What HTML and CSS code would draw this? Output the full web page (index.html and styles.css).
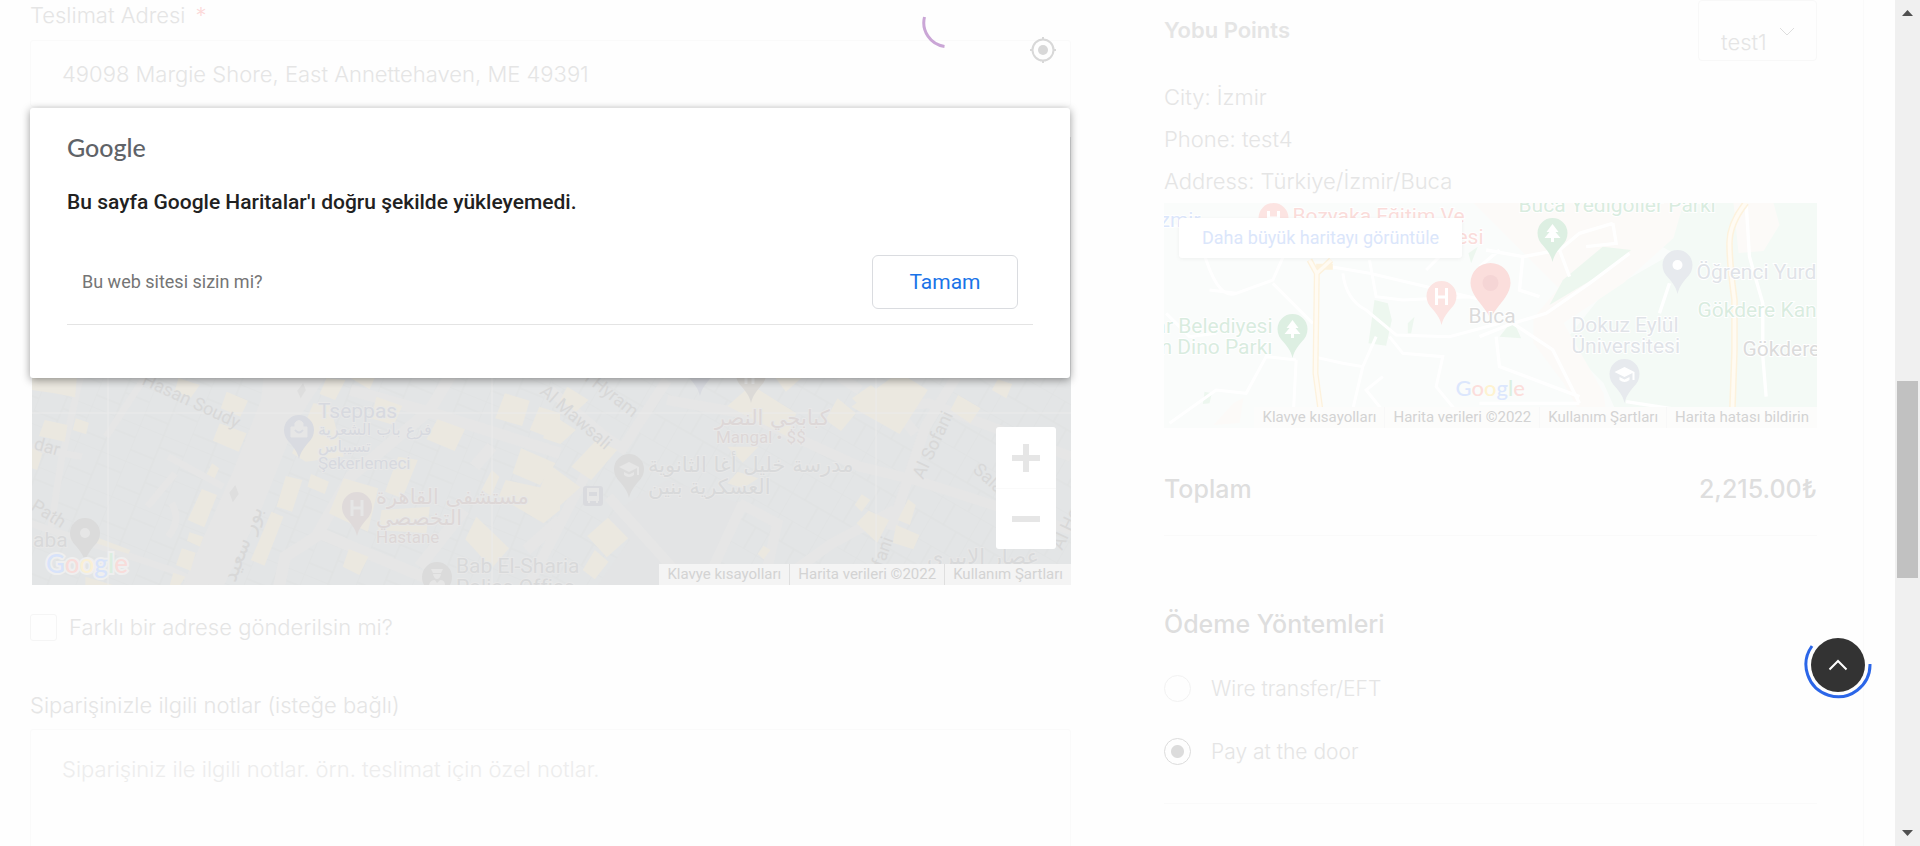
FILE: index.html
```html
<!DOCTYPE html>
<html lang="tr">
<head>
<meta charset="utf-8">
<title>Ödeme</title>
<link rel="stylesheet" href="styles.css">
</head>
<body>
<svg class="defs" width="0" height="0" aria-hidden="true">
  <defs>
    <path id="pin" d="M0 29C-2 21-5 18-9 13-13 9-15 5-15 0A15 15 0 0 1 15 0C15 5 13 9 9 13 5 18 2 21 0 29Z"/>
    <path id="tree" d="M0-10 6-2H3L8 4H1.500V8H-1.500V4H-8L-3-2H-6Z"/>
    <path id="cap" d="M0-7-10-2 0 3 8-1V6H10V-2ZM-5 3V6Q0 10 5 6V3L0 5.500Z"/>
    <pattern id="parcels" width="38" height="52" patternUnits="userSpaceOnUse" patternTransform="rotate(-68)">
      <path d="M0 0H38M0 26H38M0 0V52M13 0V26M26 26V52" fill="none" stroke="#dfe1e1" stroke-width="1"/>
    </pattern>
    <pattern id="parcels-east" width="44" height="48" patternUnits="userSpaceOnUse" patternTransform="rotate(30)">
      <path d="M0 0H44M0 24H44M0 0V48M15 0V24M30 24V48" fill="none" stroke="#dfe1e1" stroke-width="1"/>
    </pattern>
  </defs>
</svg>
<div class="page">
  <main class="checkout">
    <form class="billing">
      <label class="label" for="address">Teslimat Adresi <span class="required">*</span></label>
      <div class="address">
        <input class="address-input" id="address" type="text" value="49098 Margie Shore, East Annettehaven, ME 49391">
        <button class="locate" type="button" aria-label="Konumumu bul">
          <svg width="28" height="28" viewBox="0 0 28 28" fill="none" stroke="#d8d8d8" stroke-width="2"><circle cx="14" cy="14" r="10.500"/><path d="M14 1V4M14 24V27M1 14H4M24 14H27"/><circle cx="14" cy="14" r="5" fill="#d8d8d8" stroke="none"/></svg>
        </button>
      </div>
      <div class="map-stage">
        <div class="map">
          <svg class="map-art" viewBox="0 0 1039 448" preserveAspectRatio="xMidYMid slice">
            <rect width="1039" height="448" fill="#e3e5e6"/>
            <rect width="520" height="448" fill="url(#parcels)"/>
            <rect x="520" width="519" height="448" fill="url(#parcels-east)"/>
            <g transform="translate(-12 233) scale(.3444 .3333)">
              <path d="M710 0H900L800 160 700 420 590 650H470L620 300 700 90Z" fill="#e6e6e6"/>
              <g fill="none" stroke="#e6e6e6" stroke-width="20">
                <path d="M180 0 120 270 90 470M30 230 180 260M370 10 250 200M30 460 440 600 560 660M430 260 590 350M450 310 370 410M440 400Q470 450 430 500"/>
                <path stroke-width="34" d="M960 60 1200 130 1568 250M1260 0 1190 120 960 320 860 500 770 560 750 660M870 490 1240 650M1290 420 1160 590M1370 230 1320 290M1470 540 1568 450"/>
              </g>
              <g fill="#ebe8e0">
                <path d="M35 24H165L160 82 100 70 35 60ZM460 24 522 45 495 85 450 62ZM600 65 662 92 640 140 583 115ZM72 150 138 165 130 215 55 198ZM162 145 200 158 192 193 153 180ZM35 235 65 250 50 300 35 295ZM580 160 658 190 635 245 560 212ZM890 24 945 30 915 90 870 72ZM960 24H1030L1015 58ZM1035 80 1110 108 1085 165 1020 145ZM1212 148 1292 178 1262 243 1180 208ZM1408 70 1480 92 1458 168 1380 145ZM1508 110 1568 130V215L1480 180ZM852 100 900 105 940 260 830 275 790 250ZM1098 260 1155 270 1110 385 1060 365ZM1455 235 1555 280 1510 345 1430 310ZM1370 300 1392 320 1368 378 1340 360Z"/>
                <path d="M772 318 820 330 790 425 745 410ZM845 312 897 335 885 372 835 350ZM558 280 578 295 565 325 542 312ZM528 357 572 375 535 472 487 450ZM940 325 1040 355 1010 485 897 430ZM1050 420 1190 410 1180 490 1040 480ZM1410 330 1568 365V420L1520 460 1390 380ZM730 425 765 440 710 587 670 570ZM1325 440 1420 535 1370 595 1293 508ZM492 487 533 500 522 530 485 512ZM470 535 510 548 495 602 453 585ZM955 537 1012 560 985 615 937 590ZM445 608 480 620 465 645H435ZM230 505 320 540 315 552 222 520ZM190 620 270 645H190Z"/>
              </g>
              <path d="M822 40 830 60 815 85 805 62ZM625 345 635 372 618 397 608 368Z" fill="#dedede"/>
            </g>
            <g transform="translate(518 233) scale(.3444 .3333)">
              <path d="M270 370 340 330 550 400 470 645H140L230 510 170 440Z" fill="#e3e4e5"/>
              <g fill="none" stroke="#e6e6e6" stroke-width="30">
                <path d="M0 60 160 200 210 235 340 30M160 200-60 640M170 380 400 645M340 90 560 130 900 290 1060 330 1513 480M560 400 450 645M550 400 660 460 620 645M840 20 900 60M1180 20 1090 170 990 480M990 110 1100 100 1513 260M1000 420 820 520 650 645M960 60 1060 190"/>
              </g>
              <g fill="#ebe8e0">
                <path d="M50 50 112 90 75 125 30 90ZM0 130 75 180 30 222-20 205ZM135 210 195 240 120 330 62 290ZM0 285 88 352 15 420-40 380ZM585 45 715 130 690 200 515 108ZM655 24H730L685 65ZM835 85 888 130 845 183 800 150ZM932 45 962 72 910 118 877 85ZM990 24H1040L1097 60 1015 192 875 110ZM1185 75 1250 115 1220 160 1163 120ZM1300 28 1342 42 1325 85 1283 60Z"/>
                <path d="M515 230H605L560 278ZM545 305 605 325 560 355 515 340ZM905 373 930 390 905 425 885 405ZM1040 388 1062 405 1045 465 1010 450ZM925 422 985 450 950 518 890 460ZM1005 465 1073 495 1055 538 995 518ZM620 527 640 540 620 568 603 552ZM168 443 227 505 165 562 108 498ZM130 540 170 575 130 628 95 600Z"/>
              </g>
            </g>
            <path d="M0 276H1039M76 0V448M460 0V448M844 0V448" stroke="#ebebeb" fill="none"/>
            <g class="street">
              <text transform="translate(109 247) rotate(25)">Hasan Soudy</text>
              <text transform="translate(1 312) rotate(15)">dar</text>
              <text transform="translate(-2 372) rotate(32)">Path</text>
              <text transform="translate(203 446) rotate(-69)" class="ar">بور سعيد</text>
              <text transform="translate(507 256) rotate(41)">Al Mawsali</text>
              <text transform="translate(552 243) rotate(38)">l Hyram</text>
              <text transform="translate(891 343) rotate(-65)">Al Sofani</text>
              <text transform="translate(940 334) rotate(42)">Sala</text>
              <text transform="translate(851 431) rotate(-70)">fani</text>
              <text transform="translate(1030 414) rotate(-65)">Al Ho</text>
            </g>
            <g class="poi poi-blue">
              <text x="286" y="281">Tseppas</text><text x="286" y="298" class="ar-small">فرع باب الشعرية</text><text x="286" y="315" class="ar-small">تسيباس</text><text x="286" y="332" class="small">Şekerlemeci</text>
            </g>
            <g class="poi poi-red">
              <text x="344" y="367" class="ar">مستشفى القاهرة</text><text x="344" y="388" class="ar">التخصصي</text><text x="344" y="406" class="small">Hastane</text>
            </g>
            <g class="poi poi-red"><text x="683" y="288" class="ar">كبابجي النصر</text><text x="684" y="306" class="small">Mangal • $$</text></g>
            <g class="poi"><text x="616" y="335" class="ar">مدرسة خليل أغا الثانوية</text><text x="616" y="357" class="ar">العسكرية بنين</text>
              <text x="1" y="410">aba</text><text x="424" y="436">Bab El-Sharia</text><text x="424" y="457">Police Office</text><text x="895" y="427" class="ar">عصار الابيري</text></g>
            <use href="#pin" x="267" y="293" fill="#d9dbe1"/><path d="M259 290H275V300H259ZM263 290V286Q267 281 271 286V290" fill="#e6e6e6" stroke="#e6e6e6"/><path d="M263 293Q267 298 271 293" fill="none" stroke="#d9dbe1" stroke-width="2"/>
            <use href="#pin" x="325" y="370" fill="#dfdada"/><path d="M320 363V379M330 363V379M320 371H330" stroke="#e6e6e6" stroke-width="3"/>
            <use href="#pin" x="53" y="396" fill="#dbdbdb"/><circle cx="53" cy="396" r="5" fill="#e6e6e6"/>
            <use href="#pin" x="405" y="440" fill="#dbdbdb"/><path d="M399 432H411L409 436H401ZM401 437H409Q408 442 405 442T401 437ZM397 448Q398 443 403 443L405 446 408 443Q413 443 413 448Z" fill="#e6e6e6"/>
            <use href="#pin" x="597" y="332" fill="#dbdbdb"/><use href="#cap" x="597" y="332" fill="#e6e6e6"/>
            <use href="#pin" x="668" y="230" fill="#d9dbe1"/><use href="#pin" x="719" y="237" fill="#dcdad7"/>
            <path d="M714 230V247M721 230V247" stroke="#e6e6e6" stroke-width="3"/>
            <rect x="551" y="349" width="20" height="20" rx="3" fill="#d9dade"/><path d="M556 352H566V363H556ZM557 363V366M565 363V366" fill="#e6e6e6" stroke="#e6e6e6" stroke-width="2"/><path d="M557 355H565V359H557Z" fill="#d9dade"/>
            <text class="glogo glogo-halo" x="14" y="436"><tspan fill="#d8e3fa">G</tspan><tspan fill="#f8dcda">o</tspan><tspan fill="#faf0d5">o</tspan><tspan fill="#d8e3fa">g</tspan><tspan fill="#dbeee0">l</tspan><tspan fill="#f8dcda">e</tspan></text>
          </svg>
          <div class="zoom">
            <button class="zoom-btn" type="button" aria-label="Yakınlaştır"><svg width="28" height="28" viewBox="0 0 28 28"><path d="M0 14H28M14 0V28" stroke="#e6e6e6" stroke-width="6"/></svg></button>
            <button class="zoom-btn" type="button" aria-label="Uzaklaştır"><svg width="28" height="28" viewBox="0 0 28 28"><path d="M0 14H28" stroke="#e6e6e6" stroke-width="6"/></svg></button>
          </div>
          <div class="credits"><button class="credit" type="button">Klavye kısayolları</button><span class="credit">Harita verileri ©2022</span><a class="credit" href="#">Kullanım Şartları</a></div>
        </div>
        <section class="dialog" role="dialog" aria-labelledby="dialog-title">
          <div class="dialog-logo">Google</div>
          <h2 class="dialog-title" id="dialog-title">Bu sayfa Google Haritalar'ı doğru şekilde yükleyemedi.</h2>
          <div class="dialog-row"><a class="dialog-link" href="#">Bu web sitesi sizin mi?</a><button class="dialog-ok" type="button">Tamam</button></div>
        </section>
      </div>
      <label class="check"><input class="check-box" type="checkbox">Farklı bir adrese gönderilsin mi?</label>
      <label class="label" for="notes">Siparişinizle ilgili notlar (isteğe bağlı)</label>
      <textarea class="notes" id="notes" placeholder="Siparişiniz ile ilgili notlar. örn. teslimat için özel notlar."></textarea>
    </form>

    <aside class="summary">
      <div class="points">
        <h3 class="points-title">Yobu Points</h3>
        <div class="picker">
          <select class="picker-select" aria-label="Yobu Points"><option>test1</option></select>
          <svg class="picker-arrow" width="16" height="10" viewBox="0 0 16 10" fill="none" stroke="#dedede"><path d="M1 1 8 8 15 1"/></svg>
        </div>
      </div>
      <p class="info">City: İzmir</p>
      <p class="info">Phone: test4</p>
      <p class="info">Address: Türkiye/İzmir/Buca</p>
      <div class="mini">
        <svg class="map-art" viewBox="0 0 654 225" preserveAspectRatio="xMidYMid slice">
          <rect width="654" height="225" fill="#fafcfb"/>
          <path d="M420 0 654 0V225H460L440 180 400 140 440 90 510 50Z" fill="#f4faf6"/>
          <path d="M310 0H520L510 35 460 80 400 120 440 190 445 225H425L400 180 370 140 370 115 395 85 350 40ZM570 0H610L616 22 600 48 575 50ZM70 200 80 195 76 220 50 222Z" fill="#fcfaf8"/>
          <g transform="translate(-14 -13) scale(.3333)" fill="#edf7ef">
            <path d="M675 330 715 340 727 390 710 467 657 460ZM795 380 785 430H775V400ZM165 605 187 610 180 640 160 642ZM985 170 965 220 957 190Z"/>
            <path fill="none" stroke="#fff" stroke-width="9" d="M50 110Q130 90 170 210T260 310L370 270 410 180M260 310 180 300M370 280 490 400M545 230 660 250 1000 330M660 210 680 320 760 330 960 320M580 250Q590 330 650 360L740 435 900 440 1050 400M490 500 580 520 640 530 680 440M640 530 600 700M440 510 430 700M440 510 350 500 290 610 200 600 60 700M50 370 120 440 200 430M720 440 760 490 880 500 860 590 950 700M700 560 650 600 730 700M700 100 830 110 870 200 830 240"/>
            <path fill="none" stroke="#fdf2dd" stroke-width="18" d="M480 210 502 250 498 550 520 713M545 210 502 250M500 230H550"/><path fill="none" stroke="#fffbf3" stroke-width="10" d="M480 210 502 250 498 550 520 713M545 210 502 250"/>
          </g>
          <g transform="translate(316 -13) scale(.3333)" fill="#edf7ef">
            <path d="M370 170 455 180 370 250 210 345 250 270ZM60 440 100 390 125 445Z"/>
            <path fill="none" stroke="#fff" stroke-width="10" d="M20 180 130 200 240 180 300 130 400 100M130 200 120 300 180 320M240 180 270 260M450 190 330 280 200 370 100 400 0 440M100 400 220 480 300 640M50 440 60 530 300 620M0 640H300M440 635 600 660M800 40 810 200 850 340 850 500 860 620M400 100 410 160 320 170M60 180 0 230M570 280 540 370"/>
            <path fill="none" stroke="#fdf2dd" stroke-width="20" d="M800 38Q750 100 750 160T765 330V480L757 710"/><path fill="none" stroke="#fffbf3" stroke-width="11" d="M800 38Q750 100 750 160T765 330V480L757 710"/>
          </g>
          <g class="place">
            <text class="b" x="-4" y="24">zmir</text><text class="r" x="129" y="20">Bozyaka Eğitim Ve</text><text class="r end" x="320" y="41">Hastanesi</text>
            <text class="g end" x="109" y="130">ar Belediyesi</text><text class="g end" x="109" y="151">m Dino Parkı</text>
            <text class="g" x="355" y="9">Buca Yedigöller Parkı</text><text class="n" x="533" y="76">Öğrenci Yurd</text><text class="g" x="534" y="114">Gökdere Kan</text><text class="k" x="579" y="153">Gökdere</text>
            <text class="n" x="408" y="129">Dokuz Eylül</text><text class="n" x="408" y="150">Üniversitesi</text>
          </g>
          <use href="#pin" x="110" y="15" fill="#fce4e2"/><path d="M105 8V22M115 8V22M105 15H115" stroke="#fff" stroke-width="3"/>
          <use href="#pin" x="129" y="126" fill="#ddefe2"/><use href="#tree" x="129" y="127" fill="#fff"/>
          <use href="#pin" x="278" y="93" fill="#fce4e2"/><path d="M273 85V102M283 85V102M273 94H283" stroke="#fff" stroke-width="3"/>
          <path d="M327 116C324 108 318 103 312 94 309 89 307 85 307 80A20 20 0 0 1 347 80C347 85 345 89 342 94 336 103 330 108 327 116Z" fill="#fbdedc"/><circle cx="327" cy="80" r="8" fill="#f5d5d5"/>
          <g class="place"><text class="k" x="305" y="120">Buca</text></g>
          <use href="#pin" x="389" y="30" fill="#ddefe2"/><use href="#tree" x="389" y="31" fill="#fff"/>
          <use href="#pin" x="514" y="62" fill="#e7eaee"/><circle cx="514" cy="62" r="5" fill="#fff"/>
          <use href="#pin" x="461" y="171" fill="#e7eaee"/><use href="#cap" x="461" y="171" fill="#fff"/>
          <text class="glogo glogo-small" x="292" y="193"><tspan fill="#dce7fd">G</tspan><tspan fill="#fcdedb">o</tspan><tspan fill="#fef3d0">o</tspan><tspan fill="#dce7fd">g</tspan><tspan fill="#dcf0e1">l</tspan><tspan fill="#fcdedb">e</tspan></text>
        </svg>
        <a class="bigger" href="#">Daha büyük haritayı görüntüle</a>
        <div class="credits credits-mini"><button class="credit" type="button">Klavye kısayolları</button><span class="credit">Harita verileri ©2022</span><a class="credit" href="#">Kullanım Şartları</a><a class="credit" href="#">Harita hatası bildirin</a></div>
      </div>
      <div class="total"><span>Toplam</span><span>2,215.00₺</span></div>
      <h3 class="pay-title">Ödeme Yöntemleri</h3>
      <div class="methods">
        <label class="method"><input class="radio" type="radio" name="pay">Wire transfer/EFT</label>
        <label class="method"><input class="radio" type="radio" name="pay" checked>Pay at the door</label>
      </div>
    </aside>
  </main>
  <div class="scrollbar" aria-hidden="true">
    <svg width="25" height="25" viewBox="0 0 25 25"><path d="M7 16 12.500 10 18 16Z" fill="#505050"/></svg>
    <div class="track"><div class="thumb"></div></div>
    <svg width="25" height="25" viewBox="0 0 25 25"><path d="M7 9 12.500 15 18 9Z" fill="#505050"/></svg>
  </div>
</div>
<svg class="spinner" width="54" height="54" viewBox="0 0 54 54" fill="none" stroke="#caa6d6" stroke-width="3"><path d="M3.500 21A24 24 0 0 0 23.500 50.500"/></svg>
<button class="to-top" type="button" aria-label="Yukarı çık">
  <svg width="68" height="68" viewBox="0 0 68 68" fill="none"><circle cx="34" cy="34" r="27" fill="#333"/><path d="M66 33A32 32 0 1 1 8 15" stroke="#2b66e8" stroke-width="3"/><path d="M25.500 38.500 34 30 42.500 38.500" stroke="#fff" stroke-width="2"/></svg>
</button>
</body>
</html>
```
FILE: styles.css
```css
* { box-sizing: border-box; }
body { margin: 0; height: 100vh; overflow: hidden; background: #fefefe; color: #e5e5e5; font: 300 22px/30px Inter, "Open Sans", sans-serif; }
h2, h3, p { margin: 0; }
button, input, select, textarea { margin: 0; padding: 0; border: 0; background: none; color: inherit; font: inherit; }
a { color: inherit; text-decoration: none; }
.defs { position: absolute; }
.page { display: flex; height: 100vh; overflow: hidden; }
.checkout { flex: 1; display: grid; grid-template-columns: 1041fr 746fr; gap: 47px; padding: 0 31px 0 30px; min-width: 0; }

.billing { display: flex; flex-direction: column; min-width: 0; }
.label { display: block; height: 40px; }
.required { margin-left: 4px; color: #fcd9d9; }
.address { position: relative; height: 67px; margin-bottom: 30px; }
.address-input { width: 100%; height: 100%; padding: 0 60px 0 31px; border: 1px solid #fafafa; border-radius: 3px; }
.locate { position: absolute; top: -4px; right: 14px; height: 28px; line-height: 0; }

.map-stage { position: relative; }
.map { position: relative; height: 448px; margin-left: 2px; overflow: hidden; }
.map-art { display: block; width: 100%; height: 100%; font-family: Roboto, sans-serif; font-weight: 400; }
.street { font-size: 18px; fill: #d8d8d8; }
.poi { font-size: 21px; fill: #d8d9da; paint-order: stroke; stroke: #e8e8e8; stroke-width: 2px; }
.poi-blue { fill: #d7d9df; }
.poi-red { fill: #ddd7d7; }
.small { font-size: 17px; }
.ar { font-size: 21px; font-family: "DejaVu Sans", sans-serif; }
.ar-small { font-size: 16px; font-family: "DejaVu Sans", sans-serif; }
.glogo { font: 500 26px Lato, sans-serif; }
.glogo-halo { paint-order: stroke; stroke: #efefef; stroke-width: 4px; }
.glogo-small { font-size: 22px; }

.zoom { position: absolute; right: 15px; bottom: 36px; width: 60px; border-radius: 3px; background: #fff; }
.zoom-btn { display: flex; align-items: center; justify-content: center; width: 100%; height: 61px; }
.zoom-btn + .zoom-btn { border-top: 1px solid #fafafa; }

.credits { position: absolute; right: 0; bottom: 0; display: flex; height: 21px; background: #f4f4f4; color: #d3d3d3; font: 400 15px/21px Roboto, sans-serif; }
.credit { padding: 0 8px; white-space: nowrap; }
.credit + .credit { border-left: 1px solid #dfdfdf; }
.credits-mini { background: #fcfcfb; }
.credits-mini .credit + .credit { border-color: #f8f8f8; }

.dialog { position: absolute; top: -29px; left: 0; right: 1px; height: 270px; padding: 22px 37px; border-radius: 3px; background: #fff; box-shadow: 0 2px 9px rgba(0, 0, 0, .4); font-family: Roboto, sans-serif; }
.dialog-logo { color: #5f6368; font: 500 25px/34px Lato, sans-serif; }
.dialog-title { margin-top: 23px; color: #212121; font-size: 21px; font-weight: 500; line-height: 30px; }
.dialog-row { display: flex; align-items: center; justify-content: space-between; margin-top: 38px; padding: 0 15px 15px; border-bottom: 1px solid #e4e4e4; }
.dialog-link { color: #757575; font-size: 18px; font-weight: 400; }
.dialog-ok { width: 146px; height: 54px; border: 1px solid #dadce0; border-radius: 6px; color: #1a73e8; font-size: 21px; font-weight: 400; }

.check { display: flex; align-items: center; gap: 12px; margin: 27px 0 48px; }
.check-box { appearance: none; width: 27px; height: 27px; border: 1px solid #f5f5f5; border-radius: 3px; }
.check + .label { height: 39px; }
.notes { display: block; height: 180px; padding: 24px 31px; border: 1px solid #fafafa; border-radius: 3px; resize: none; }
.notes::placeholder { color: #ededed; opacity: 1; }

.summary { padding: 0 46px; border-right: 1px solid #fafafa; min-width: 0; }
.points { display: flex; justify-content: space-between; height: 61px; margin-bottom: 15px; }
.points-title { padding-top: 15px; font-size: 22px; font-weight: 600; }
.picker { position: relative; width: 119px; height: 61px; }
.picker-select { appearance: none; width: 100%; height: 100%; padding: 26px 36px 4px 22px; border: 1px solid #f8f8f8; border-radius: 4px; }
.picker-arrow { position: absolute; right: 22px; top: 27px; }
.info { line-height: 42px; }
.mini { position: relative; height: 225px; margin-top: 1px; overflow: hidden; }
.place { font-size: 21px; paint-order: stroke; stroke: #fff; stroke-width: 2px; }
.end { text-anchor: end; }
.b { fill: #dbe6fb; }
.r { fill: #fadcda; }
.g { fill: #d9ecdf; }
.n { fill: #e0e3e8; }
.k { fill: #dbdbdb; }
.bigger { position: absolute; top: 15px; left: 15px; padding: 0 23px; border-radius: 3px; background: #fff; box-shadow: 0 1px 4px rgba(0, 0, 0, .05); color: #dbe6fb; font: 400 18px/40px Roboto, sans-serif; }
.total { display: flex; justify-content: space-between; height: 108px; padding-top: 46px; border-bottom: 1px solid #fafafa; color: #dedede; font-size: 25px; font-weight: 500; }
.pay-title { margin-top: 73px; color: #dedede; font-size: 25px; font-weight: 500; line-height: 30px; }
.methods { padding: 18px 0 20px; border-bottom: 1px solid #fafafa; }
.method { display: flex; align-items: center; gap: 20px; height: 63px; font-size: 21px; }
.radio { appearance: none; width: 27px; height: 27px; border: 1px solid #f2f2f2; border-radius: 50%; }
.radio:checked { border-color: #dcdcdc; background: radial-gradient(circle, #dcdcdc 6px, transparent 7px); }

.scrollbar { flex: none; display: flex; flex-direction: column; width: 25px; background: #f0f0f0; }
.track { flex: 1; padding: 0 2px; }
.thumb { height: 197px; margin-top: 356px; background: #c1c1c1; }
.spinner { position: fixed; left: 921px; top: -4px; }
.to-top { position: fixed; right: 48px; bottom: 147px; height: 68px; line-height: 0; }
```
